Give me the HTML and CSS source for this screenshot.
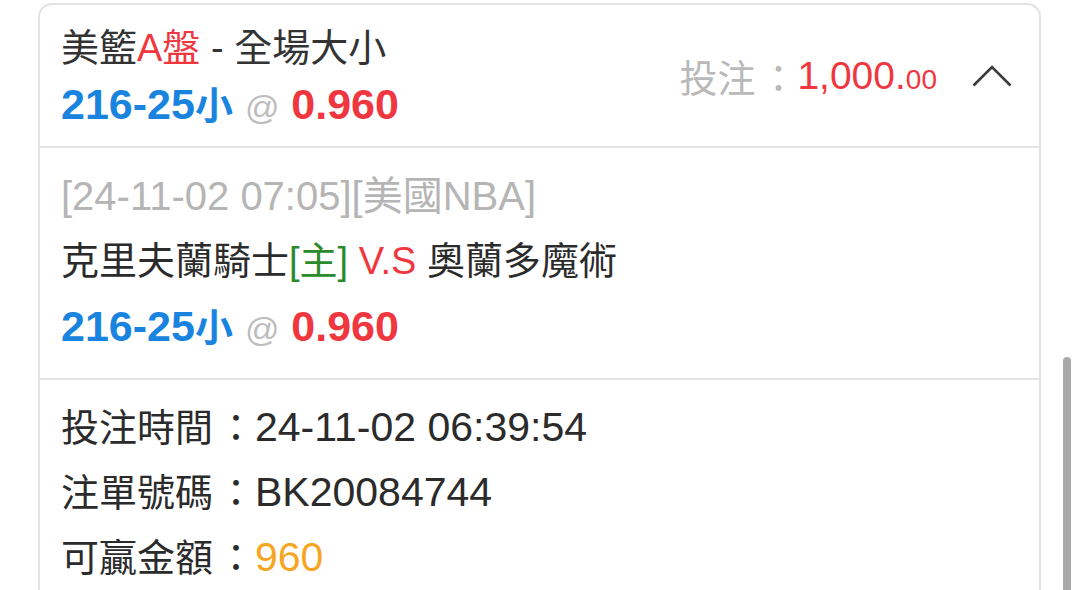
FILE: index.html
```html
<!DOCTYPE html>
<html lang="zh-Hant">
<head>
  <meta charset="UTF-8">
  <title>注單詳情</title>
  <link rel="stylesheet" href="styles.css">
</head>
<body>

  <div class="bet-card">
    <div class="bet-head">
      <div class="head-left">
        <div class="bet-title">美籃<span class="red">A盤</span> - 全場大小</div>
        <div class="odds"><span class="pick">216-25<span class="zh">小</span></span> <span class="at">@</span> <span class="price">0.960</span></div>
      </div>
      <div class="head-right">
        <span class="stake-label">投注<span class="colon">：</span></span><span class="stake">1,000.<small>00</small></span>
        <svg class="chevron" width="40" height="22" viewBox="0 0 40 22">
          <polyline points="1.5,20.5 20,2 38.5,20.5" />
        </svg>
      </div>
    </div>

    <div class="bet-match">
      <div class="match-time">[24-11-02 07:05][美國NBA]</div>
      <div class="teams">克里夫蘭騎士<span class="home">[主]</span> <span class="red">V.S</span> 奧蘭多魔術</div>
      <div class="odds"><span class="pick">216-25<span class="zh">小</span></span> <span class="at">@</span> <span class="price">0.960</span></div>
    </div>

    <div class="bet-info">
      <div class="info-row">投注時間<span class="colon">：</span><span class="val">24-11-02 06:39:54</span></div>
      <div class="info-row">注單號碼<span class="colon">：</span><span class="val">BK20084744</span></div>
      <div class="info-row">可贏金額<span class="colon">：</span><span class="val win">960</span></div>
    </div>
  </div>

  <div class="scroll-thumb"></div>

</body>
</html>
```

FILE: styles.css
```css
html, body {
  margin: 0;
  height: 100%;
  overflow: hidden;
  background-color: #fff;
}
body {
  font-family: "Liberation Sans", "Noto Sans CJK TC", sans-serif;
  font-size: 38px;
  color: #333;
}
.bet-card {
  width: 1003px;
  margin: 3px 0 0 38px;
  box-sizing: border-box;
  border: 2px solid #e3e3e3;
  border-radius: 14px 14px 0 0;
}
.red {
  color: #f0373f;
}
.colon {
  display: inline-block;
  width: 1em;
  padding-left: 4px;
}
.bet-head {
  display: flex;
  align-items: center;
  justify-content: space-between;
  padding: 15px 27px 11px 21px;
}
.bet-title {
  line-height: 56px;
}
.bet-head .odds {
  line-height: 56px;
}
.odds {
  font-size: 43px;
  font-weight: bold;
  line-height: 65px;
}
.odds .zh {
  font-size: 38px;
}
.pick {
  color: #1884e0;
}
.at {
  font-size: 34px;
  font-weight: normal;
  color: #bdbdbd;
}
.price {
  color: #f0373f;
}
.head-right {
  display: flex;
  align-items: center;
  margin-bottom: 4px;
}
.stake-label {
  color: #b9b9b9;
}
.stake {
  font-size: 39px;
  color: #f0373f;
}
.stake small {
  font-size: 28px;
}
.chevron {
  margin-left: 35px;
  fill: none;
  stroke: #3a3a3a;
  stroke-width: 2.6;
}
.bet-match {
  border-top: 2px solid #e3e3e3;
  padding: 16px 21px 16px;
}
.match-time {
  font-size: 40px;
  line-height: 65px;
  color: #b5b5b5;
}
.teams {
  line-height: 65px;
  color: #2b2b2b;
}
.home {
  color: #2c8a2c;
}
.bet-info {
  border-top: 2px solid #e3e3e3;
  padding: 16px 21px 40px;
}
.info-row {
  line-height: 65px;
  color: #2b2b2b;
}
.val {
  font-size: 41px;
  line-height: 1;
}
.win {
  color: #f5a623;
}
.scroll-thumb {
  position: absolute;
  left: 1063px;
  top: 357px;
  width: 8px;
  height: 240px;
  border-radius: 4px;
  background-color: #a9a9a9;
}
```
